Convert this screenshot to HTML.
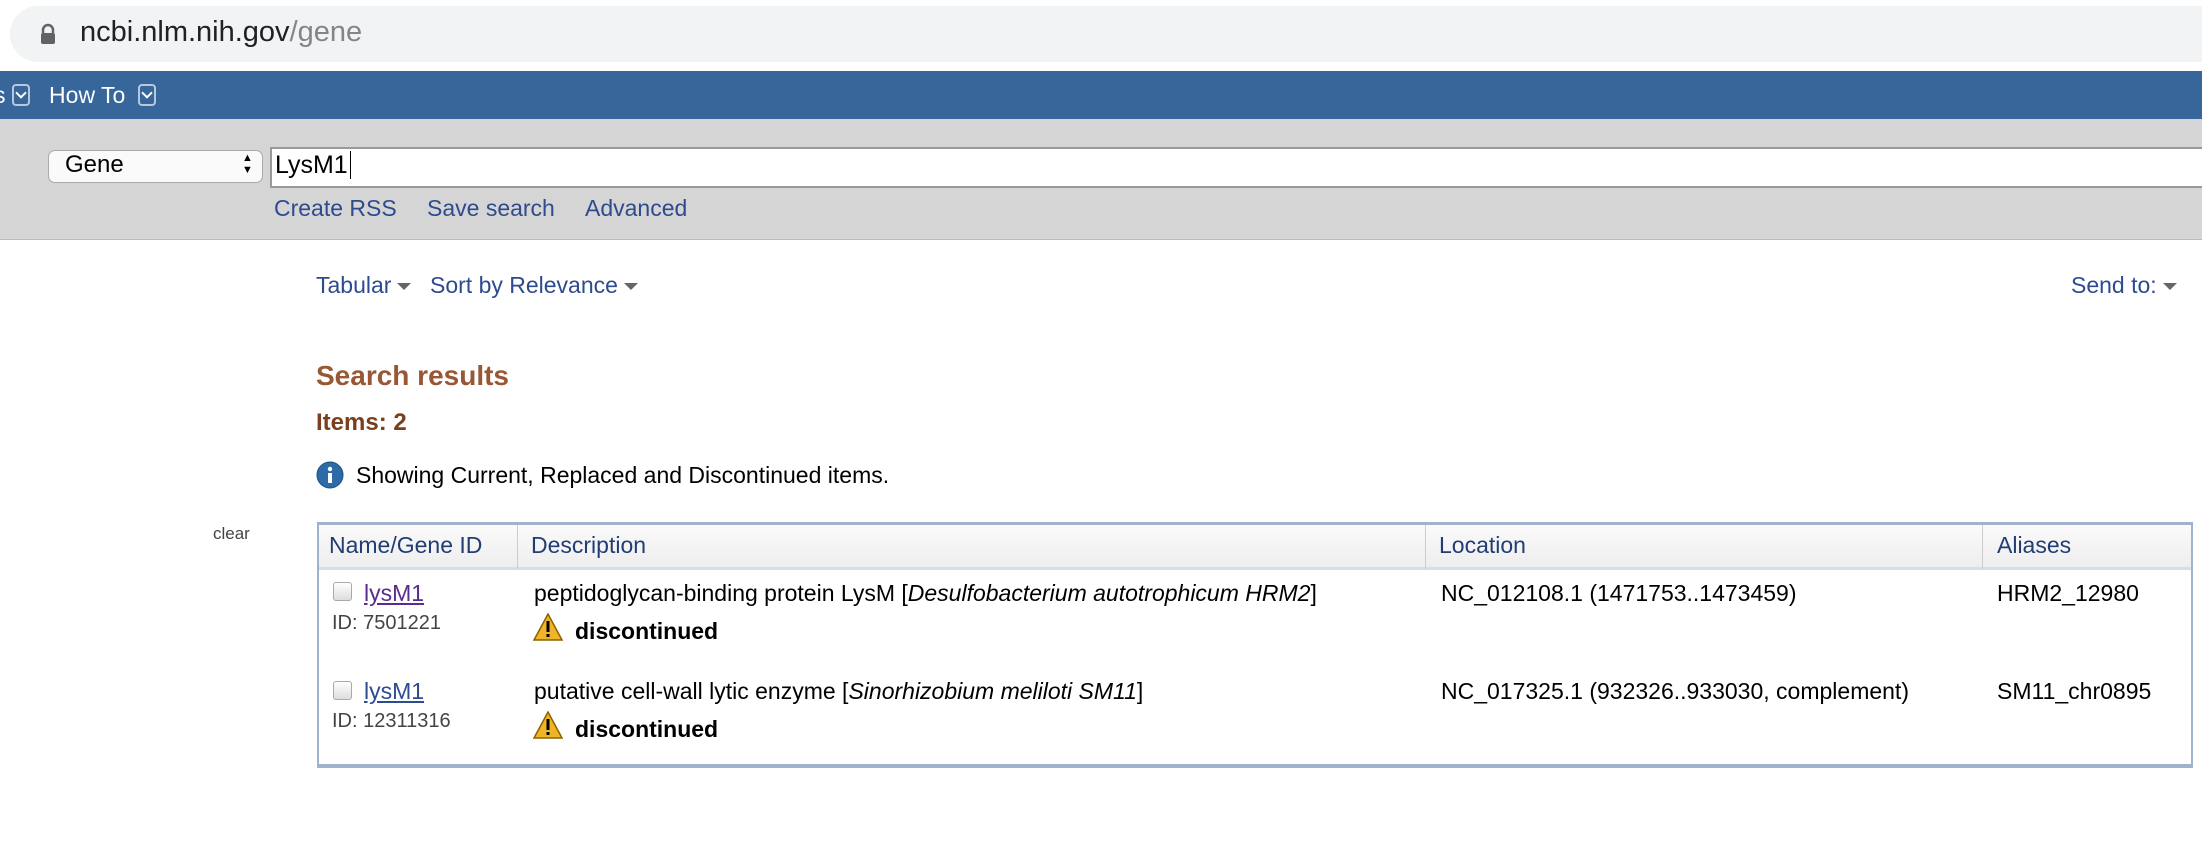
<!DOCTYPE html>
<html><head><meta charset="utf-8"><style>
body{margin:0;width:2202px;height:862px;position:relative;background:#fff;font-family:"Liberation Sans",Arial,sans-serif;overflow:hidden}
.a{position:absolute;white-space:nowrap}
.lk{color:#2d4b8e}
.tri{display:inline-block;width:0;height:0;border-left:7px solid transparent;border-right:7px solid transparent;border-top:7px solid #666;vertical-align:middle;margin-left:6px}
.dd{display:inline-block;width:18px;height:22px;border:2px solid #b8c8dc;border-radius:4px;box-sizing:border-box;vertical-align:middle;position:relative;top:-2px}
.dd:after{content:"";position:absolute;left:3px;top:3px;width:6px;height:6px;border-right:2px solid #fff;border-bottom:2px solid #fff;transform:rotate(45deg)}
.cb{position:absolute;width:17px;height:17px;border:1px solid #aaa;border-radius:3px;background:linear-gradient(#fff,#ddd)}
</style></head><body>
<div class="a" style="left:10px;top:6px;width:2220px;height:56px;background:#f1f3f4;border-radius:28px"></div>
<svg class="a" style="left:40px;top:23px" width="16" height="22"><path d="M3 10V7a5 5 0 0 1 10 0v3" fill="none" stroke="#5f6368" stroke-width="2.5"/><rect x="1" y="10" width="14" height="11" rx="2" fill="#5f6368"/></svg>
<div class="a" style="left:80px;top:16px;font-size:29px;color:#202124">ncbi.nlm.nih.gov<span style="color:#80868b">/gene</span></div>
<div class="a" style="left:0;top:71px;width:2202px;height:48px;background:#37679a"></div>
<div class="a" style="left:-6px;top:82px;font-size:23px;color:#fff">s <span class="dd"></span>&nbsp;&nbsp; How To&nbsp; <span class="dd"></span></div>
<div class="a" style="left:0;top:119px;width:2202px;height:120px;background:#d5d5d5;border-bottom:1px solid #bbb"></div>
<div class="a" style="left:48px;top:150px;width:213px;height:31px;background:#fafafa;border:1px solid #aaa;border-radius:7px"></div>
<div class="a" style="left:65px;top:151px;font-size:24px;color:#000">Gene</div>
<div class="a" style="left:242px;top:152px;font-size:11px;line-height:12px;color:#000">▲<br>▼</div>
<div class="a" style="left:270px;top:147px;width:1940px;height:37px;background:#fff;border:2px solid #999;border-right:none"></div>
<div class="a" style="left:275px;top:151px;font-size:25px;color:#000">LysM1 <span style="border-left:1.5px solid #000;margin-left:2px"></span></div>
<div class="a lk" style="left:274px;top:195px;font-size:23px">Create RSS</div>
<div class="a lk" style="left:427px;top:195px;font-size:23px">Save search</div>
<div class="a lk" style="left:585px;top:195px;font-size:23px">Advanced</div>
<div class="a lk" style="left:316px;top:272px;font-size:23px">Tabular<span class="tri"></span></div>
<div class="a lk" style="left:430px;top:272px;font-size:23px">Sort by Relevance<span class="tri"></span></div>
<div class="a lk" style="left:2071px;top:272px;font-size:23px">Send to:<span class="tri"></span></div>
<div class="a" style="left:316px;top:360px;font-size:28px;font-weight:bold;color:#985735">Search results</div>
<div class="a" style="left:316px;top:409px;font-size:24px;font-weight:bold;color:#7a3f1d">Items: 2</div>
<svg class="a" style="left:316px;top:461px" width="28" height="28"><circle cx="14" cy="14" r="13" fill="#2c6aa8" stroke="#1d4f80"/><circle cx="14" cy="8" r="2.2" fill="#fff"/><rect x="12" y="12" width="4" height="10" fill="#fff"/></svg>
<div class="a" style="left:356px;top:462px;font-size:23px;color:#000">Showing Current, Replaced and Discontinued items.</div>
<div class="a" style="left:213px;top:524px;font-size:17px;color:#444">clear</div>
<div class="a" style="left:317px;top:522px;width:1876px;height:246px;border:2px solid #9fb4cc;border-top:3px solid #9fb4cc;border-bottom:4px solid #9fb4cc;box-sizing:border-box;"></div>
<div class="a" style="left:319px;top:525px;width:1872px;height:42px;background:linear-gradient(#fafafa,#eee);border-bottom:3px solid #d3dfeb"></div>
<div class="a" style="left:517px;top:525px;width:1px;height:44px;background:#ccc"></div>
<div class="a" style="left:1425px;top:525px;width:1px;height:44px;background:#ccc"></div>
<div class="a" style="left:1982px;top:525px;width:1px;height:44px;background:#ccc"></div>
<div class="a" style="left:329px;top:532px;font-size:23px;color:#223d73">Name/Gene ID</div>
<div class="a" style="left:531px;top:532px;font-size:23px;color:#223d73">Description</div>
<div class="a" style="left:1439px;top:532px;font-size:23px;color:#223d73">Location</div>
<div class="a" style="left:1997px;top:532px;font-size:23px;color:#223d73">Aliases</div>

<div class="cb" style="left:333px;top:582px"></div>
<div class="a" style="left:364px;top:580px;font-size:23px;color:#5b2c8f;text-decoration:underline">lysM1</div>
<div class="a" style="left:332px;top:612px;font-size:20px;color:#444">ID: 7501221</div>
<div class="a" style="left:534px;top:580px;font-size:23px;color:#000">peptidoglycan-binding protein LysM [<i>Desulfobacterium autotrophicum HRM2</i>]</div>
<svg class="a" style="left:533px;top:613px" width="30" height="28"><path d="M15 1L29 27H1Z" fill="#f0b429" stroke="#8a6200" stroke-width="1.5"/><rect x="13.5" y="8" width="3" height="11" fill="#000"/><rect x="13.5" y="21" width="3" height="3" fill="#000"/></svg>
<div class="a" style="left:575px;top:618px;font-size:23px;font-weight:bold;color:#000">discontinued</div>
<div class="a" style="left:1441px;top:580px;font-size:23px;color:#000">NC_012108.1 (1471753..1473459)</div>
<div class="a" style="left:1997px;top:580px;font-size:23px;color:#000">HRM2_12980</div>

<div class="cb" style="left:333px;top:681px"></div>
<div class="a" style="left:364px;top:678px;font-size:23px;color:#2d4b8e;text-decoration:underline">lysM1</div>
<div class="a" style="left:332px;top:710px;font-size:20px;color:#444">ID: 12311316</div>
<div class="a" style="left:534px;top:678px;font-size:23px;color:#000">putative cell-wall lytic enzyme [<i>Sinorhizobium meliloti SM11</i>]</div>
<svg class="a" style="left:533px;top:711px" width="30" height="28"><path d="M15 1L29 27H1Z" fill="#f0b429" stroke="#8a6200" stroke-width="1.5"/><rect x="13.5" y="8" width="3" height="11" fill="#000"/><rect x="13.5" y="21" width="3" height="3" fill="#000"/></svg>
<div class="a" style="left:575px;top:716px;font-size:23px;font-weight:bold;color:#000">discontinued</div>
<div class="a" style="left:1441px;top:678px;font-size:23px;color:#000">NC_017325.1 (932326..933030, complement)</div>
<div class="a" style="left:1997px;top:678px;font-size:23px;color:#000">SM11_chr0895</div>
</body></html>
